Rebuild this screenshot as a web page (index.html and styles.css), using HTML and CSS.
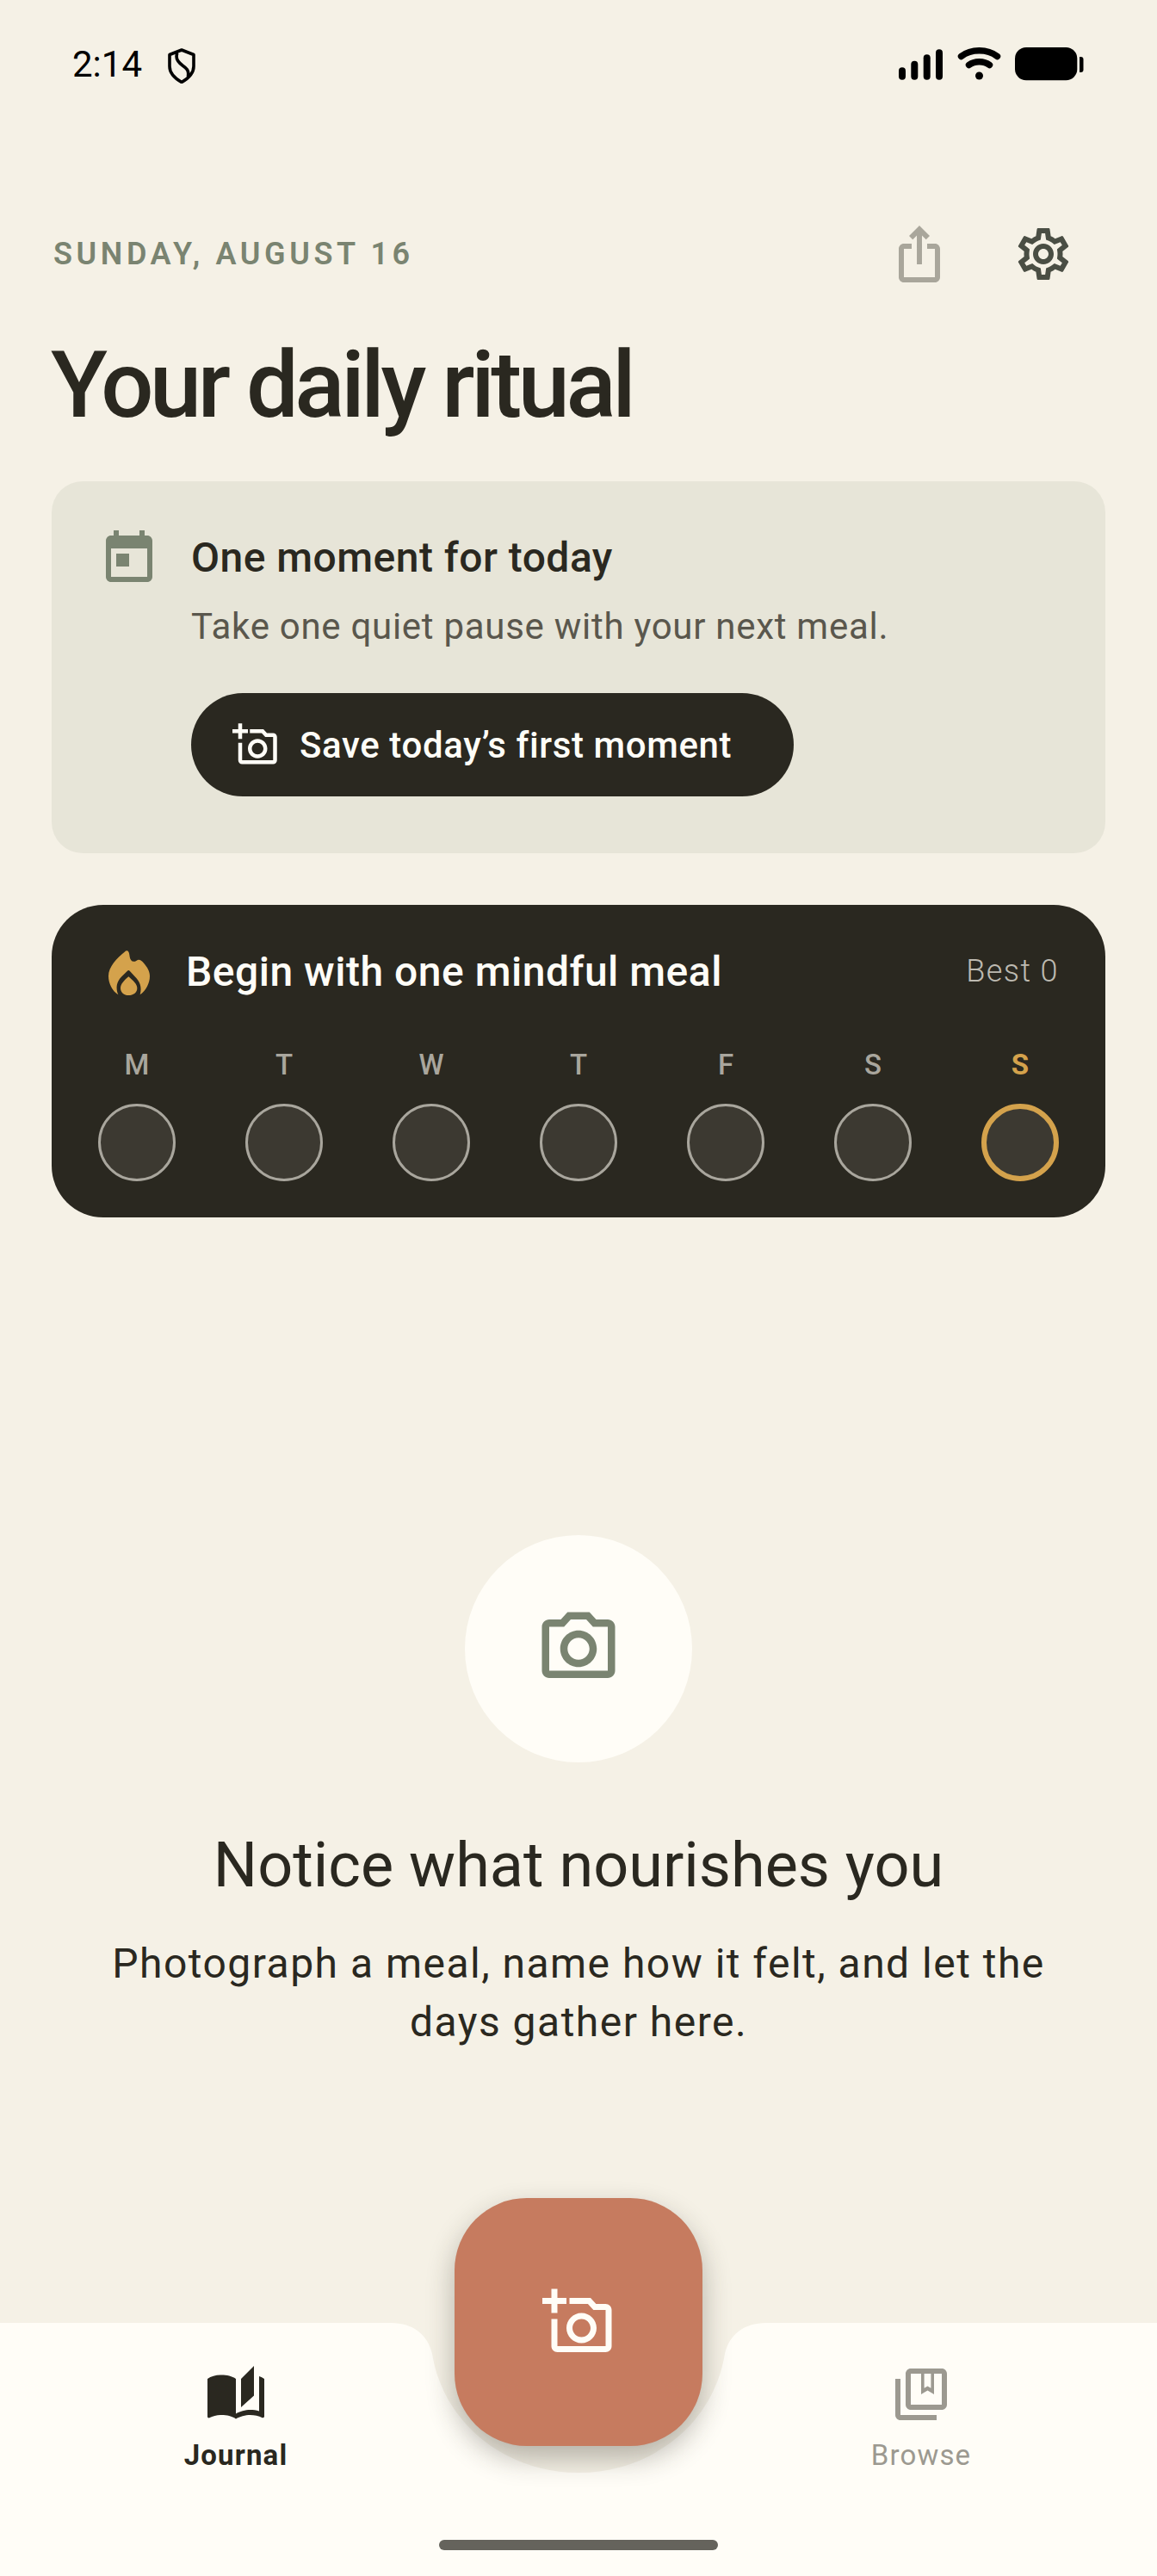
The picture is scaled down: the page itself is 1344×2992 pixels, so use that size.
FILE: index.html
```html
<!DOCTYPE html>
<html lang="en">
<head>
<meta charset="utf-8">
<title>Your daily ritual</title>
<link rel="stylesheet" href="styles.css">
</head>
<body>
<div class="page">
  <header class="status">
    <div class="status-left">
      <span class="time">2:14</span>
      <svg class="shield" viewBox="0 0 32 41" aria-hidden="true"><path class="shield-line" d="M16 2 L30 7.5 V21 C30 30 23 35.500 16 39.500 C9 35.500 2 30 2 21 V7.500 Z M10.500 7 C8.500 13 13 17 17 20 C22 23.500 24.500 26 23.500 32"/></svg>
    </div>
    <svg class="status-right" viewBox="0 0 215 40" aria-hidden="true">
      <rect x="0" y="23.300" width="8" height="14.400" rx="4"/>
      <rect x="14.300" y="15.700" width="8" height="22" rx="4"/>
      <rect x="28.700" y="8.300" width="8" height="29.400" rx="4"/>
      <rect x="43" y="2.300" width="8" height="35.400" rx="4"/>
      <path class="wifi" d="M72.500 10.500 C84 1.500 103 1.500 114.500 10.500"/>
      <path class="wifi" d="M81.500 20.500 C88 15.500 99 15.500 105.500 20.500"/>
      <circle cx="93.500" cy="33" r="4.500"/>
      <rect x="135" y="0" width="72.300" height="38.300" rx="13"/>
      <path d="M210 11 h1.500 a3 3 0 0 1 3 3 v12 a3 3 0 0 1 -3 3 h-1.500 z"/>
    </svg>
  </header>

  <section class="top-row">
    <p class="date">SUNDAY, AUGUST 16</p>
    <div class="actions">
      <svg class="icon icon-share" viewBox="0 0 24 24" aria-hidden="true"><path d="M16 5l-1.420 1.420-1.590-1.590V16h-1.980V4.830L9.420 6.420 8 5l4-4 4 4zm4 5v11c0 1.100-.9 2-2 2H6c-1.110 0-2-.9-2-2V10c0-1.110.89-2 2-2h3v2H6v11h12V10h-3V8h3c1.100 0 2 .89 2 2z"/></svg>
      <svg class="icon icon-gear" viewBox="0 0 24 24" aria-hidden="true"><path d="M19.430 12.980c.04-.32.07-.64.07-.98 0-.34-.03-.66-.07-.98l2.110-1.650c.19-.15.24-.42.12-.64l-2-3.460c-.09-.16-.26-.25-.44-.25-.06 0-.12.01-.17.03l-2.490 1c-.52-.4-1.080-.73-1.690-.98l-.38-2.650C14.460 2.180 14.250 2 14 2h-4c-.25 0-.46.18-.49.42l-.38 2.650c-.61.25-1.170.59-1.690.98l-2.490-1c-.06-.02-.12-.03-.18-.03-.17 0-.34.09-.43.25l-2 3.460c-.13.22-.07.49.12.64l2.110 1.650c-.04.32-.07.65-.07.98 0 .33.03.66.07.98l-2.110 1.650c-.19.15-.24.42-.12.64l2 3.460c.09.16.26.25.44.25.06 0 .12-.01.17-.03l2.490-1c.52.4 1.080.73 1.690.98l.38 2.650c.03.24.24.42.49.42h4c.25 0 .46-.18.49-.42l.38-2.650c.61-.25 1.170-.59 1.690-.98l2.490 1c.06.02.12.03.18.03.17 0 .34-.09.43-.25l2-3.460c.12-.22.07-.49-.12-.64l-2.110-1.650zm-1.980-1.710c.04.31.05.52.05.73 0 .21-.02.43-.05.73l-.14 1.130.89.7 1.080.84-.7 1.210-1.270-.51-1.040-.42-.9.68c-.43.32-.84.56-1.250.73l-1.060.43-.16 1.130-.2 1.350h-1.400l-.19-1.350-.16-1.130-1.060-.43c-.43-.18-.83-.41-1.230-.71l-.91-.7-1.060.43-1.270.51-.7-1.210 1.080-.84.89-.7-.14-1.130c-.03-.31-.05-.54-.05-.74s.02-.43.05-.73l.14-1.130-.89-.7-1.080-.84.7-1.210 1.270.51 1.040.42.9-.68c.43-.32.84-.56 1.250-.73l1.060-.43.16-1.130.2-1.350h1.390l.19 1.350.16 1.130 1.060.43c.43.18.83.41 1.230.71l.91.7 1.060-.43 1.270-.51.7 1.210-1.070.85-.89.7.14 1.130zM12 8c-2.210 0-4 1.790-4 4s1.790 4 4 4 4-1.790 4-4-1.790-4-4-4zm0 6c-1.100 0-2-.9-2-2s.9-2 2-2 2 .9 2 2-.9 2-2 2z"/></svg>
    </div>
  </section>

  <h1 class="title">Your daily ritual</h1>

  <section class="moment-card">
    <svg class="icon icon-today" viewBox="0 0 24 24" aria-hidden="true"><path d="M19 3h-1V1h-2v2H8V1H6v2H5c-1.110 0-1.990.9-1.990 2L3 19c0 1.100.89 2 2 2h14c1.100 0 2-.9 2-2V5c0-1.100-.9-2-2-2zm0 16H5V8h14v11zM7 10h5v5H7z"/></svg>
    <div class="moment-body">
      <h2 class="moment-title">One moment for today</h2>
      <p class="moment-sub">Take one quiet pause with your next meal.</p>
      <button class="moment-btn" type="button">
        <svg class="icon-btn" viewBox="0 0 24 24" aria-hidden="true"><path d="M21 6h-3.170L16 4H9v2h6.120l1.830 2H21v12H5v-9H3v9c0 1.100.9 2 2 2h16c1.100 0 2-.9 2-2V8c0-1.100-.9-2-2-2zM8 14c0 2.760 2.240 5 5 5s5-2.240 5-5-2.240-5-5-5-5 2.240-5 5zm5-3c1.650 0 3 1.350 3 3s-1.350 3-3 3-3-1.350-3-3 1.350-3 3-3zM5 9V6h3V4H5V1H3v3H0v2h3v3z"/></svg>
        <span>Save today’s first moment</span>
      </button>
    </div>
  </section>

  <section class="streak-card">
    <div class="streak-head">
      <svg class="icon-flame" viewBox="174 99 192 192" aria-hidden="true"><path fill-rule="evenodd" d="M262 124 C268 124 270 130 272 145 C274 160 284 166 296 158 C304 152 312 156 320 166 C334 182 342 196 342 212 C342 238 328 262 308 277 C316 250 306 230 290 214 L272 194 Q268 190 264 194 L244 214 C226 232 222 254 232 277 C212 264 198 238 198 212 C198 180 228 148 254 128 Q258 124 262 124 Z M268 214 C284 228 298 240 298 254 C298 270 284 279 268 279 C252 279 240 268 240 254 C240 240 254 226 268 214 Z"/></svg>
      <h2 class="streak-title">Begin with one mindful meal</h2>
      <span class="streak-best">Best 0</span>
    </div>
    <div class="days">
      <div class="day"><span class="day-label">M</span><span class="day-dot"></span></div>
      <div class="day"><span class="day-label">T</span><span class="day-dot"></span></div>
      <div class="day"><span class="day-label">W</span><span class="day-dot"></span></div>
      <div class="day"><span class="day-label">T</span><span class="day-dot"></span></div>
      <div class="day"><span class="day-label">F</span><span class="day-dot"></span></div>
      <div class="day"><span class="day-label">S</span><span class="day-dot"></span></div>
      <div class="day day-today"><span class="day-label">S</span><span class="day-dot"></span></div>
    </div>
  </section>

  <section class="empty">
    <div class="empty-circle">
      <svg class="icon-camera" viewBox="0 0 24 24" aria-hidden="true"><path d="M20 4h-3.170L15 2H9L7.170 4H4c-1.100 0-2 .9-2 2v12c0 1.100.9 2 2 2h16c1.100 0 2-.9 2-2V6c0-1.100-.9-2-2-2zm0 14H4V6h4.050l1.830-2h4.240l1.830 2H20v12zM12 7c-2.760 0-5 2.240-5 5s2.240 5 5 5 5-2.240 5-5-2.240-5-5-5zm0 8c-1.650 0-3-1.350-3-3s1.350-3 3-3 3 1.350 3 3-1.350 3-3 3z"/></svg>
    </div>
    <h2 class="empty-title">Notice what nourishes you</h2>
    <p class="empty-sub">Photograph a meal, name how it felt, and let the days gather here.</p>
  </section>

  <footer class="nav-wrap">
    <nav class="nav">
      <div class="tab tab-active">
        <svg class="icon" viewBox="0 0 24 24" aria-hidden="true"><path d="M19 1l-5 5v11l5-4.500V1zM1 6v14.650c0 .25.25.5.5.5.1 0 .15-.05.25-.05C3.100 20.450 5.050 20 6.500 20c1.950 0 4.050.4 5.500 1.500V6c-1.450-1.100-3.550-1.500-5.500-1.500S2.450 4.900 1 6zm22 13.500V6c-.6-.45-1.250-.75-2-1v13.500c-1.100-.35-2.300-.5-3.500-.5-1.700 0-4.150.65-5.500 1.500v2c1.350-.85 3.800-1.500 5.500-1.500 1.650 0 3.350.3 4.750 1.050.1.05.15.05.25.05.25 0 .5-.25.5-.5v-1.100z"/></svg>
        <span class="tab-label">Journal</span>
      </div>
      <div class="tab-gap"></div>
      <div class="tab">
        <svg class="icon" viewBox="0 0 24 24" aria-hidden="true"><path fill-rule="evenodd" d="M4 6H2v14c0 1.100.9 2 2 2h14v-2H4V6z M20 2H8c-1.100 0-2 .9-2 2v12c0 1.100.9 2 2 2h12c1.100 0 2-.9 2-2V4c0-1.100-.9-2-2-2z M20 16H8V4h4v8l2.500-1.500L17 12V4h3v12z M13.200 4h2.600v5.600l-1.300-.8-1.300.8z"/></svg>
        <span class="tab-label">Browse</span>
      </div>
    </nav>
    <div class="home-bar"></div>
    <button class="fab" type="button" aria-label="Add a moment">
      <svg class="icon-fab" viewBox="0 0 24 24" aria-hidden="true"><path d="M21 6h-3.170L16 4H9v2h6.120l1.830 2H21v12H5v-9H3v9c0 1.100.9 2 2 2h16c1.100 0 2-.9 2-2V8c0-1.100-.9-2-2-2zM8 14c0 2.760 2.240 5 5 5s5-2.240 5-5-2.240-5-5-5-5 2.240-5 5zm5-3c1.650 0 3 1.350 3 3s-1.350 3-3 3-3-1.350-3-3 1.350-3 3-3zM5 9V6h3V4H5V1H3v3H0v2h3v3z"/></svg>
    </button>
  </footer>
</div>
</body>
</html>
```

FILE: styles.css
```css
* { box-sizing: border-box; }
html, body { margin: 0; padding: 0; }
body { background: #f5f1e6; font-family: Roboto, "Noto Sans", sans-serif; color: #2a2820; }
h1, h2, p { margin: 0; font-weight: 400; }
button { border: 0; padding: 0; font: inherit; cursor: pointer; }
svg { display: block; flex: none; }

.page { width: 1344px; height: 2992px; display: flex; flex-direction: column; overflow: hidden; }

.status { height: 150px; padding: 0 85px 0 84px; display: flex; align-items: center; justify-content: space-between; flex: none; }
.status-left { display: flex; align-items: center; gap: 30px; }
.time { font-size: 42px; line-height: 48px; color: #000; }
.shield { width: 32px; height: 41px; margin-top: 2px; }
.shield-line { fill: none; stroke: #000; stroke-width: 3.6; stroke-linejoin: round; stroke-linecap: round; }
.status-right { width: 215px; height: 40px; fill: #000; }
.wifi { fill: none; stroke: #000; stroke-width: 7.5; stroke-linecap: round; }

.icon { width: 72px; height: 72px; }
.top-row { margin-top: 109px; padding: 0 96px 0 62px; height: 72px; display: flex; align-items: center; justify-content: space-between; flex: none; }
.date { font-size: 36px; font-weight: 600; letter-spacing: 4.6px; color: #7a8471; }
.actions { display: flex; gap: 72px; }
.icon-share { fill: #a9a69b; }
.icon-gear { fill: #4a4e44; }

.title { margin: 50px 0 46px 59px; font-size: 108px; line-height: 132px; font-weight: 500; letter-spacing: -4.4px; color: #2a2820; flex: none; }

.moment-card { margin: 0 60px; height: 432px; padding: 54px 54px 0; background: #e7e5d8; border-radius: 36px; display: flex; gap: 36px; flex: none; }
.icon-today { fill: #7a8471; }
.moment-body { padding-top: 1px; }
.moment-title { font-size: 48px; line-height: 67px; font-weight: 500; letter-spacing: 0.47px; color: #2a2820; }
.moment-sub { margin-top: 18px; font-size: 42px; line-height: 58px; letter-spacing: 0.72px; color: #5a574d; }
.moment-btn { margin-top: 48px; height: 120px; padding: 0 72px 0 48px; border-radius: 60px; background: #2a2820; color: #fffdf7; display: flex; align-items: center; gap: 24px; font-size: 42px; font-weight: 500; letter-spacing: 0.62px; }
.icon-btn { width: 54px; height: 54px; fill: #fffdf7; }

.streak-card { margin: 60px 60px 0; height: 363px; padding: 41px 54px 0; background: #2a2820; border-radius: 60px; flex: none; }
.streak-head { height: 72px; display: flex; align-items: center; }
.icon-flame { width: 64px; height: 64px; margin: 0 34px 0 4px; fill: #d4a24c; }
.streak-title { flex: 1; font-size: 48px; font-weight: 500; letter-spacing: 0.5px; color: #fffdf7; }
.streak-best { font-size: 36px; font-weight: 300; letter-spacing: 1.4px; color: #bdbab1; }
.days { margin-top: 51px; display: flex; justify-content: space-between; }
.day { width: 90px; display: flex; flex-direction: column; align-items: center; gap: 23px; }
.day-label { font-size: 33px; line-height: 44px; font-weight: 500; color: #a9a69d; }
.day-dot { width: 90px; height: 90px; border-radius: 50%; border: 3px solid #a9a69d; background: #3c3931; }
.day-today .day-label { color: #d4a24c; font-weight: 700; }
.day-today .day-dot { border: 6px solid #d4a24c; }

.empty { flex: 1; padding-top: 369px; display: flex; flex-direction: column; align-items: center; }
.empty-circle { width: 264px; height: 264px; border-radius: 50%; background: #fffdf7; display: flex; align-items: center; justify-content: center; }
.icon-camera { width: 102px; height: 102px; fill: #7a8471; }
.empty-title { margin-top: 72px; font-size: 72px; line-height: 96px; color: #2a2820; }
.empty-sub { margin-top: 32px; width: 1120px; text-align: center; font-size: 48px; line-height: 68px; letter-spacing: 1.48px; color: #2a2820; }

.nav-wrap { position: relative; height: 294px; flex: none; }
.nav { height: 294px; background: #fffdf7; display: grid; grid-template-columns: 548px 248px 548px; clip-path: path("M0 0 H454 C480 0 497 14 502 36 C516 120 590 174 672 174 C754 174 828 120 842 36 C847 14 864 0 890 0 H1344 V294 H0 Z"); }
.tab { padding-top: 47px; display: flex; flex-direction: column; align-items: center; color: #9c9990; fill: #9c9990; }
.tab-active { color: #2a2820; fill: #2a2820; }
.tab-label { margin-top: 14px; font-size: 33px; line-height: 42px; letter-spacing: 1.15px; }
.tab-active .tab-label { font-weight: 700; }
.home-bar { position: absolute; left: 510px; top: 252px; width: 324px; height: 12px; border-radius: 6px; background: #65635c; }
.fab { position: absolute; left: 528px; top: -145px; width: 288px; height: 288px; border-radius: 84px; background: #c67b5f; box-shadow: 0 14px 32px rgba(43,40,32,.32); display: flex; align-items: center; justify-content: center; }
.icon-fab { width: 84px; height: 84px; fill: #fffdf7; }
```
